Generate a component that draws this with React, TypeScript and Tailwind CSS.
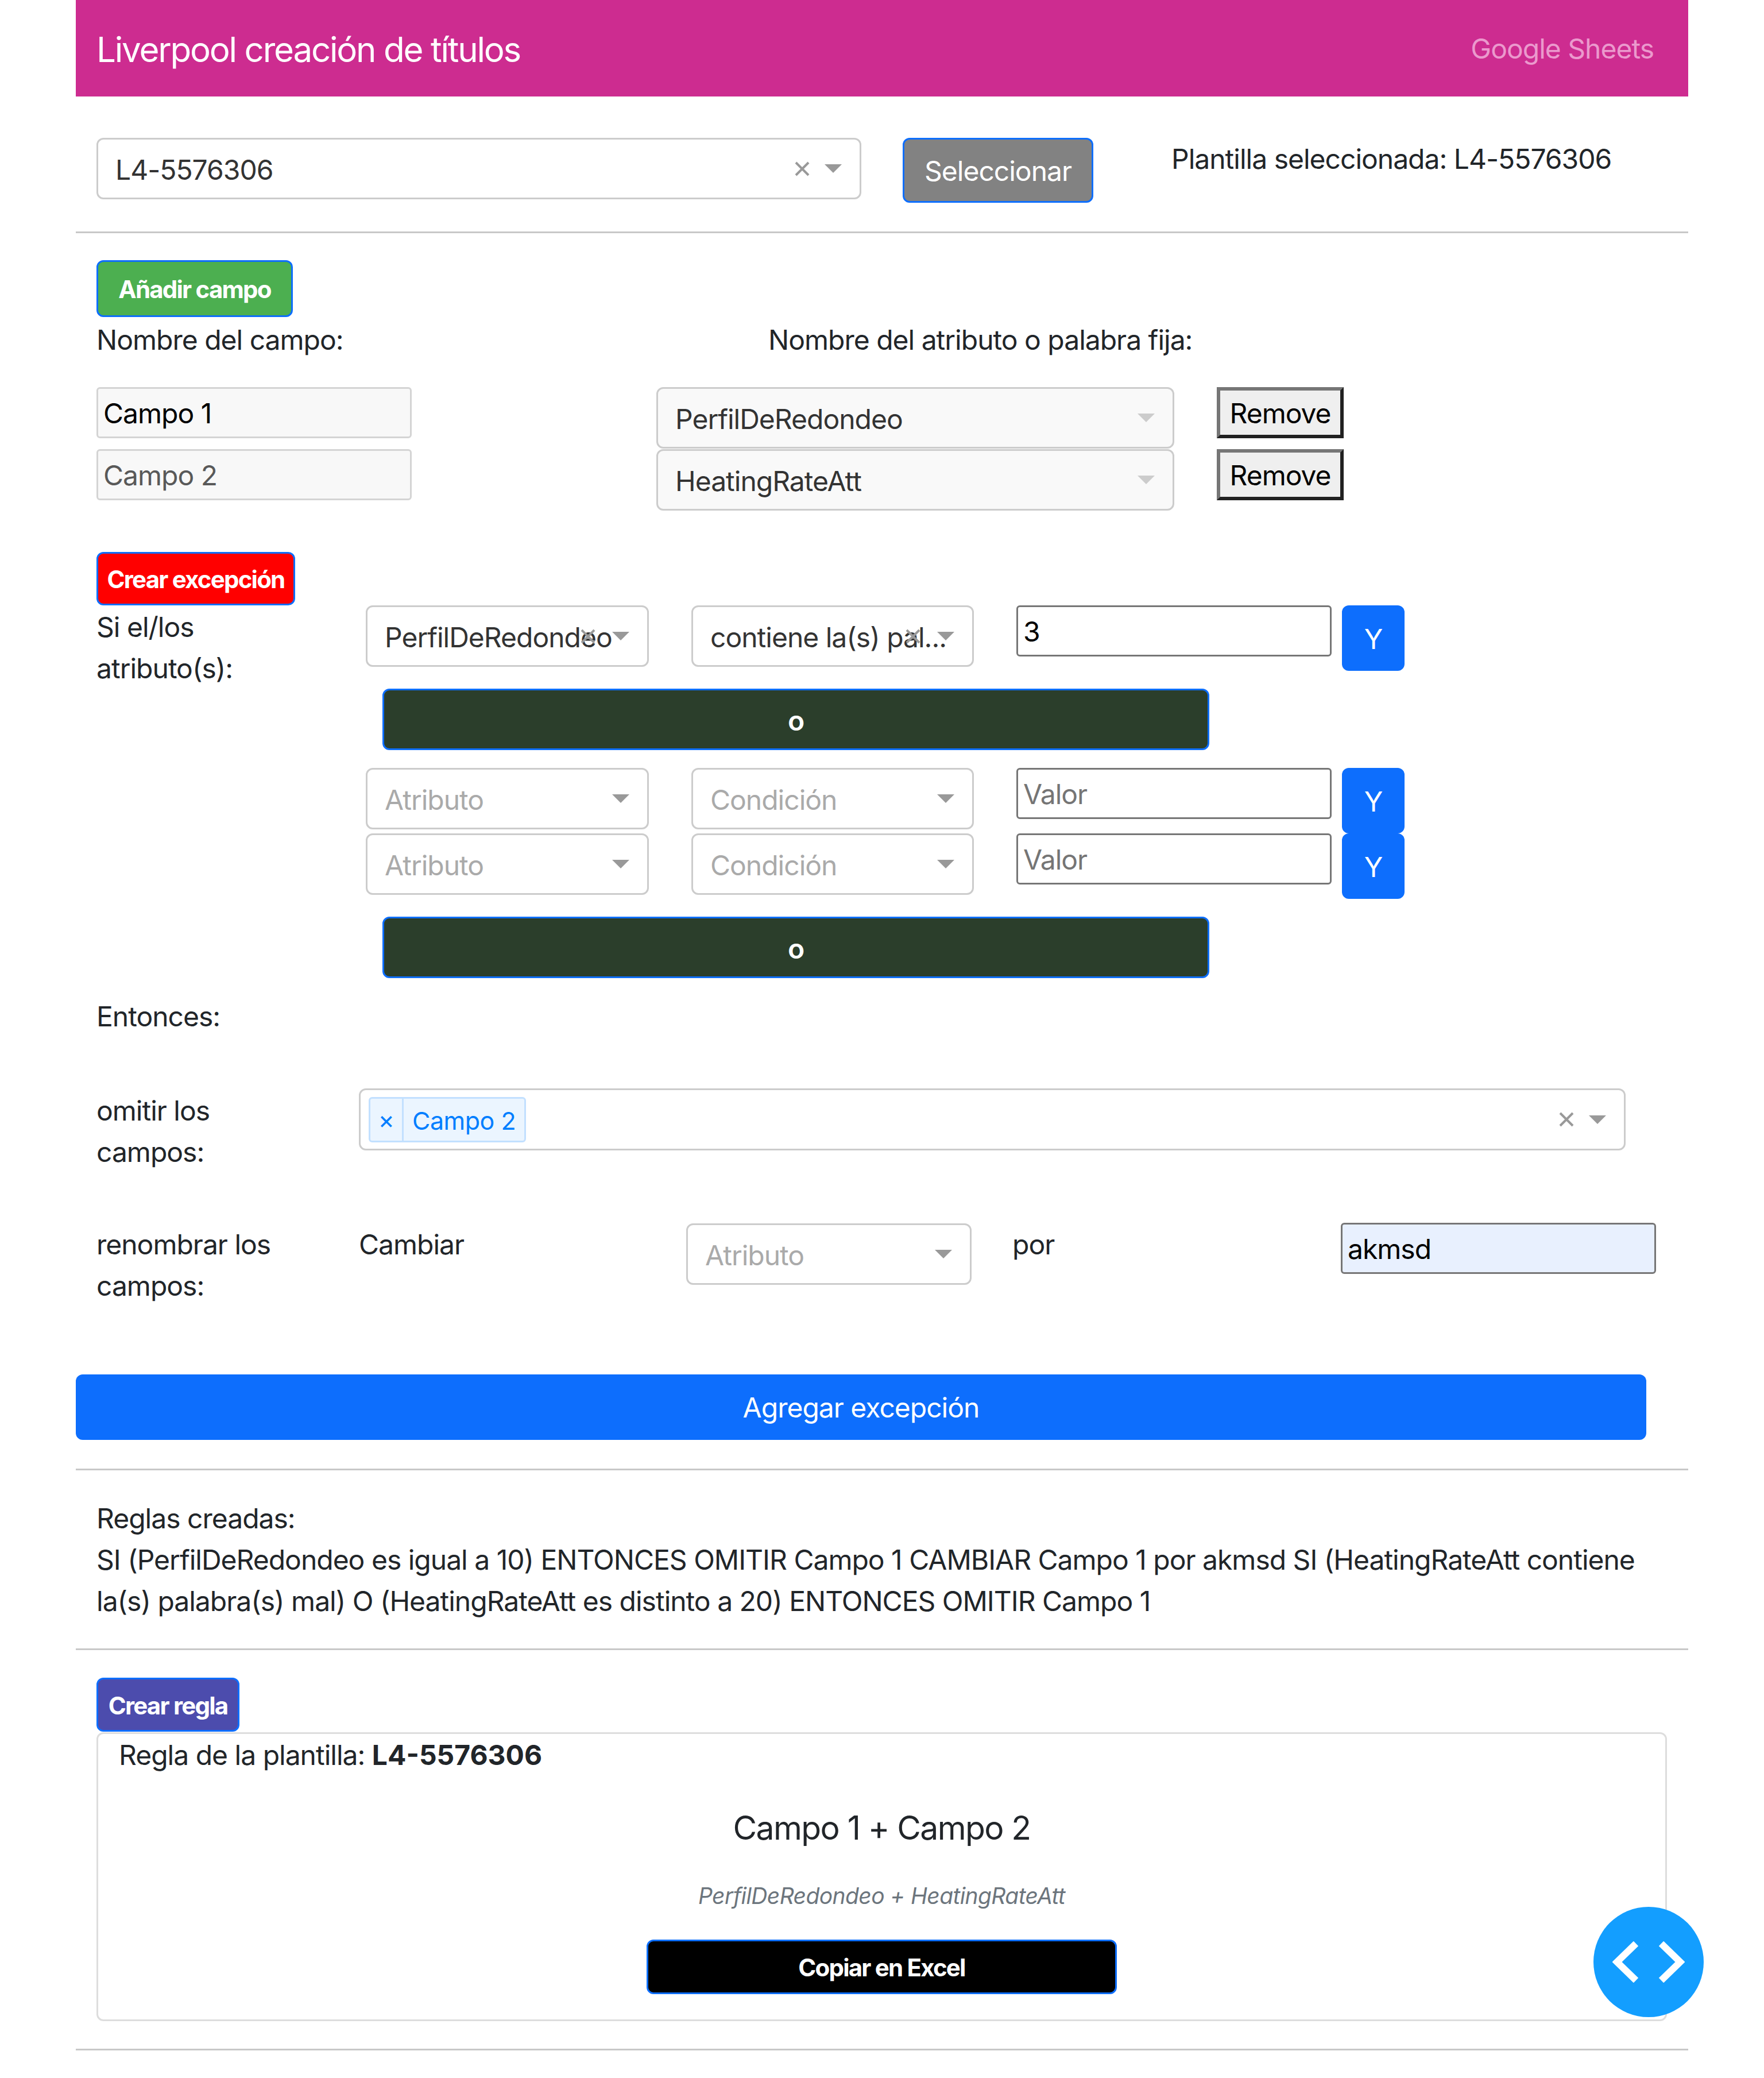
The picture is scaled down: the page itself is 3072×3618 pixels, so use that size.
import React from 'react';

const btnBorder = 'border-[3px] border-[#0d6efd] rounded-[12px]';
const boldLabel = 'text-[42px] font-bold tracking-[-1.8px] pt-[3px]';

function Caret({ color = '#999999' }: { color?: string }) {
  return (
    <span
      className="w-0 h-0 border-x-[15px] border-x-transparent border-t-[15px] shrink-0"
      style={{ borderTopColor: color }}
    />
  );
}

function Clear() {
  return (
    <svg width="30" height="30" viewBox="0 0 30 30" className="shrink-0">
      <path d="M4 4 L26 26 M26 4 L4 26" stroke="#999999" strokeWidth="4" fill="none" />
    </svg>
  );
}

// react-select style box
function SelectBox({
  w,
  value,
  placeholder,
  clear,
  overlap,
  disabled,
}: {
  w: string;
  value?: string;
  placeholder?: string;
  clear?: boolean;
  overlap?: boolean;
  disabled?: boolean;
}) {
  return (
    <div
      className={`${w} h-[107px] shrink-0 relative flex items-center border-[3px] border-[#cccccc] rounded-[12px] pl-[30px] ${
        disabled ? 'bg-[#f9f9f9]' : 'bg-white'
      }`}
    >
      {value ? (
        <span className="text-[#333333] whitespace-nowrap pt-[4px] min-w-0">{value}</span>
      ) : (
        <span className="text-[#aaaaaa] pt-[4px]">{placeholder}</span>
      )}
      {overlap && (
        <span className="absolute right-[88px] top-[36px]">
          <Clear />
        </span>
      )}
      <div className="ml-auto shrink-0 flex items-center gap-[24px] pr-[31px]">
        {clear && <Clear />}
        <Caret color={disabled ? '#cccccc' : '#999999'} />
      </div>
    </div>
  );
}

function Field({ value, placeholder, disabled, filled }: { value?: string; placeholder?: string; disabled?: boolean; filled?: boolean }) {
  return (
    <div
      className={`w-[549px] h-[89px] shrink-0 flex items-center pl-[9px] pt-[2px] border-[3px] rounded-[6px] ${
        disabled ? 'border-[#d4d4d4] bg-[#f8f8f8]' : 'border-[#767676]'
      } ${filled ? 'bg-[#e8f0fe]' : ''}`}
    >
      {value ? <span className="text-black">{value}</span> : <span className={disabled ? 'text-[#595959]' : 'text-[#757575]'}>{placeholder}</span>}
    </div>
  );
}

function RemoveButton() {
  return (
    <div className="ml-[74px] w-[221px] h-[89px] flex items-center justify-center bg-[#efefef] border-[6px] border-t-[#767676] border-l-[#767676] border-b-[#212121] border-r-[#212121] text-black pt-[2px]">
      Remove
    </div>
  );
}

function DarkButton() {
  return (
    <div className={`ml-[29px] w-[1440px] h-[107px] flex items-center justify-center bg-[#2b3e2b] text-white text-[48px] font-semibold pt-[5px] ${btnBorder}`}>
      o
    </div>
  );
}

function YButton({ h = 'h-[114px]' }: { h?: string }) {
  return <div className={`ml-[18px] w-[109px] ${h} shrink-0 flex items-center justify-center rounded-[12px] bg-[#0d6efd] text-white pt-[4px]`}>Y</div>;
}

function ConditionRow({ attr, cond, val, overlap }: { attr?: string; cond?: string; val?: string; overlap?: boolean }) {
  return (
    <div className="flex items-start h-[114px]">
      <SelectBox w="w-[493px]" value={attr} placeholder="Atributo" overlap={overlap} />
      <div className="ml-[74px]">
        <SelectBox w="w-[492px]" value={cond} placeholder="Condición" overlap={overlap} />
      </div>
      <div className="ml-[74px]">
        <Field value={val} placeholder="Valor" />
      </div>
      <YButton />
    </div>
  );
}

const Hr = ({ className = '' }: { className?: string }) => <div className={`h-[3px] bg-[#c8c8c8] ${className}`} />;

export default function App() {
  return (
    <div className="relative min-h-[3618px] bg-white text-[#212529] text-[48px] leading-[72px] tracking-[-1px] font-['Inter','Liberation_Sans',sans-serif]">
      <div className="w-[2808px] mx-auto">
        {/* Header */}
        <div className="h-[168px] flex items-center justify-between pl-[36px] pr-[60px] bg-[#cd2c90]">
          <span className="text-white text-[60px] tracking-[-2.2px] pt-[3px]">Liverpool creación de títulos</span>
          <span className="text-[#eb99cd] pt-[2px]">Google Sheets</span>
        </div>

        {/* Template picker */}
        <div className="flex items-start pl-[36px] mt-[72px] h-[163px]">
          <div className="w-[1332px]">
            <SelectBox w="w-[1332px]" value="L4-5576306" clear />
          </div>
          <div className={`ml-[72px] w-[332px] h-[113px] flex items-center justify-center bg-[#828282] text-white pt-[3px] ${btnBorder}`}>Seleccionar</div>
          <span className="ml-[136px] mt-[1px]">Plantilla seleccionada: L4-5576306</span>
        </div>
        <Hr />

        {/* Fields */}
        <div className="pl-[36px] pt-[47px]">
          <div className={`w-[342px] h-[99px] flex items-center justify-center bg-[#4caf50] text-white ${boldLabel} ${btnBorder}`}>Añadir campo</div>
          <div className="flex h-[122px] pt-[4px]">
            <span className="w-[1170px] shrink-0">Nombre del campo:</span>
            <span>Nombre del atributo o palabra fija:</span>
          </div>
          <div className="flex items-start h-[108px]">
            <Field value="Campo 1" disabled />
            <div className="ml-[426px]"><SelectBox w="w-[902px]" value="PerfilDeRedondeo" disabled /></div>
            <RemoveButton />
          </div>
          <div className="flex items-start h-[108px]">
            <Field placeholder="Campo 2" disabled />
            <div className="ml-[426px]"><SelectBox w="w-[902px]" value="HeatingRateAtt" disabled /></div>
            <RemoveButton />
          </div>
        </div>

        {/* Exceptions */}
        <div className="pl-[36px] pt-[71px]">
          <div className={`w-[346px] h-[93px] flex items-center justify-center bg-[#ff0000] text-white ${boldLabel} ${btnBorder}`}>Crear excepción</div>
          <div className="flex">
            <div className="w-[469px] shrink-0 pt-[2px]">
              Si el/los
              <br />
              atributo(s):
            </div>
            <div>
              <ConditionRow attr="PerfilDeRedondeo" cond="contiene la(s) pal..." val="3" overlap />
              <div className="mt-[31px] mb-[31px]"><DarkButton /></div>
              <ConditionRow />
              <ConditionRow />
              <div className="mt-[31px]"><DarkButton /></div>
            </div>
          </div>
          <div className="mt-[31px] h-[161px]">Entonces:</div>
          <div className="flex h-[235px]">
            <div className="w-[457px] shrink-0 pt-[3px]">
              omitir los
              <br />
              campos:
            </div>
            <div className="w-[2206px] h-[108px] flex items-center border-[3px] border-[#cccccc] rounded-[12px] pl-[14px] pr-[31px]">
              <div className="h-[79px] flex items-stretch bg-[#ebf5ff] border-[3px] border-[#c2e0ff] rounded-[6px] text-[#007eff] text-[43px] tracking-[-0.5px]">
                <span className="w-[58px] flex items-center justify-center border-r-[3px] border-[#c2e0ff]">×</span>
                <span className="px-[15px] flex items-center pt-[3px]">Campo 2</span>
              </div>
              <div className="ml-auto flex items-center gap-[24px]">
                <Clear />
                <Caret />
              </div>
            </div>
          </div>
          <div className="flex h-[263px]">
            <div className="w-[457px] shrink-0 pt-[1px]">
              renombrar los
              <br />
              campos:
            </div>
            <span className="w-[570px] shrink-0 pt-[1px]">Cambiar</span>
            <SelectBox w="w-[497px]" placeholder="Atributo" />
            <span className="ml-[71px] w-[572px] shrink-0 pt-[1px]">por</span>
            <div className="-mt-[1px]"><Field value="akmsd" filled /></div>
          </div>
        </div>

        {/* Add exception */}
        <div className="w-[2735px] h-[114px] flex items-center justify-center rounded-[12px] bg-[#0d6efd] text-white pt-[2px]">Agregar excepción</div>
        <Hr className="mt-[50px]" />

        {/* Rules */}
        <div className="pl-[36px] pr-[36px] pt-[48px] pb-[46px]">
          Reglas creadas:
          <br />
          SI (PerfilDeRedondeo es igual a 10) ENTONCES OMITIR Campo 1 CAMBIAR Campo 1 por akmsd SI (HeatingRateAtt contiene la(s) palabra(s) mal) O (HeatingRateAtt es distinto a 20) ENTONCES OMITIR Campo 1
        </div>
        <Hr />

        {/* Rule box */}
        <div className="pl-[36px] pr-[37px] pt-[48px]">
          <div className={`w-[249px] h-[94px] flex items-center justify-center bg-[#4c4cad] text-white ${boldLabel} ${btnBorder}`}>Crear regla</div>
          <div className="mt-[1px] h-[503px] border-[3px] border-[#dddddd] rounded-[12px] px-[36px] flex flex-col">
            <div className="pt-[1px]">
              Regla de la plantilla: <b className="font-bold tracking-normal">L4-5576306</b>
            </div>
            <div className="text-center text-[57px] leading-[90px] tracking-[-1.6px] mt-[46px]">Campo 1 + Campo 2</div>
            <div className="text-center text-[39px] leading-[63px] tracking-[-0.6px] italic text-[#6c757d] mt-[41px]">PerfilDeRedondeo + HeatingRateAtt</div>
            <div className={`mx-auto mt-[45px] w-[819px] h-[95px] flex items-center justify-center bg-black text-white ${boldLabel} ${btnBorder}`}>Copiar en Excel</div>
          </div>
        </div>
        <Hr className="mt-[48px]" />
      </div>

      {/* Floating code button */}
      <div className="absolute left-[2775px] top-[3320px] w-[192px] h-[192px] rounded-full bg-[#139eff] flex items-center justify-center">
        <svg width="126" height="72" viewBox="0 0 126 72">
          <path d="M41 4 L8 36 L41 68 M85 4 L118 36 L85 68" fill="none" stroke="white" strokeWidth="12" />
        </svg>
      </div>
    </div>
  );
}
